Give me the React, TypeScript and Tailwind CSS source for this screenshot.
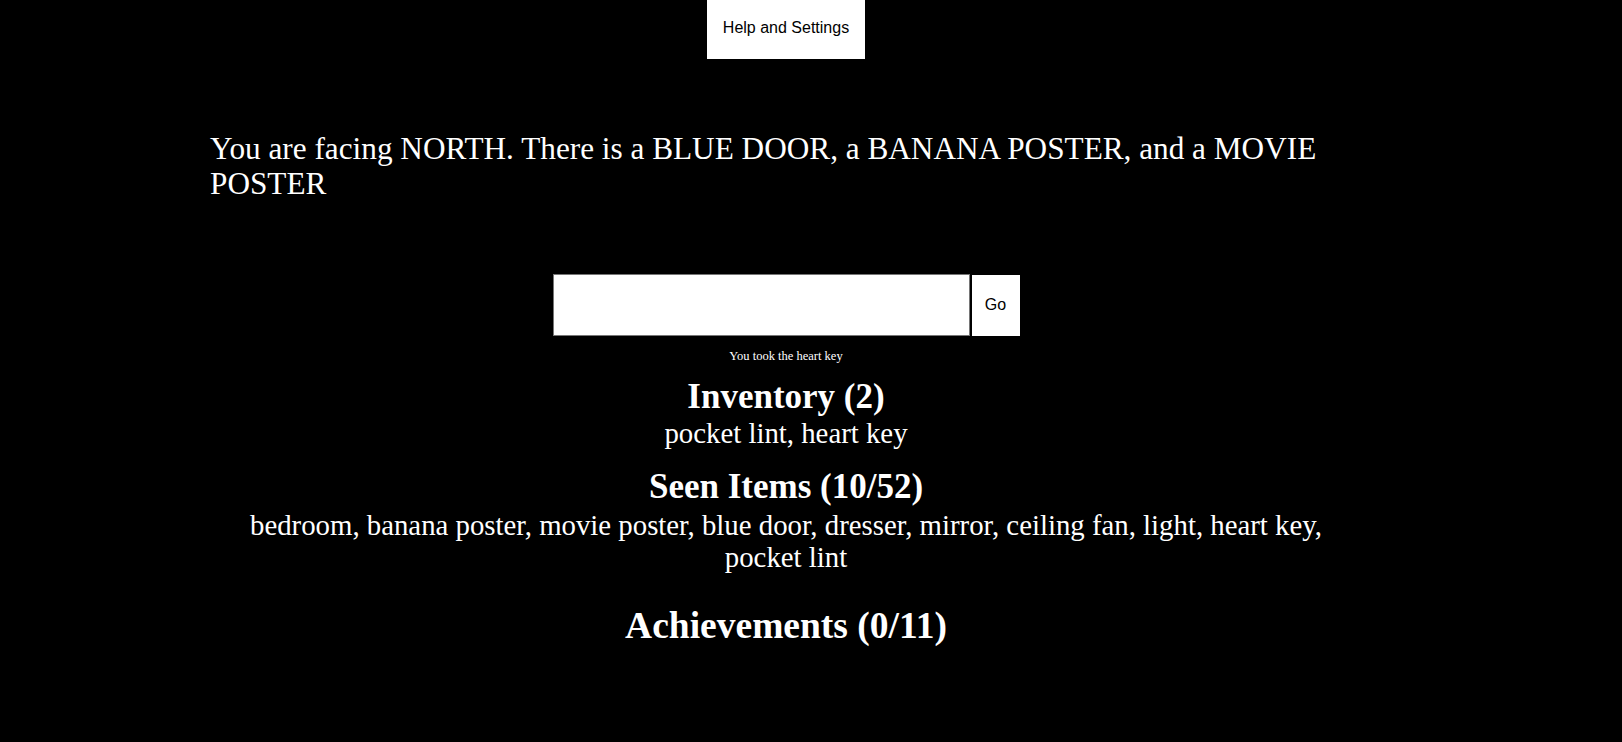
import React, { useState } from "react";

const seenItems = [
  "bedroom",
  "banana poster",
  "movie poster",
  "blue door",
  "dresser",
  "mirror",
  "ceiling fan",
  "light",
  "heart key",
  "pocket lint",
];

const inventory = ["pocket lint", "heart key"];

const App = () => {
  const [command, setCommand] = useState("");

  return (
    <div className="min-h-[742px] w-full bg-black text-white font-['Liberation_Serif',serif]">
      <div className="w-[1572px] flex flex-col items-center">
        <button
          type="button"
          className="h-[59px] px-[16px] pb-[4px] bg-white text-black text-[16px] font-['Liberation_Sans',Arial,sans-serif]"
        >
          Help and Settings
        </button>

        <div className="w-full px-[210px] mt-[72px]">
          <p className="text-[31.25px] leading-[35px]">
            You are facing NORTH. There is a BLUE DOOR, a BANANA POSTER, and a
            MOVIE POSTER
          </p>
        </div>

        <form
          className="flex items-center gap-[2px] mt-[73px]"
          onSubmit={(e) => e.preventDefault()}
        >
          <input
            value={command}
            onChange={(e) => setCommand(e.target.value)}
            className="w-[417px] h-[62px] bg-white text-black border border-[#767676] outline-none px-2 text-[16px]"
          />
          <button
            type="submit"
            className="w-[48px] h-[61px] bg-white text-black text-[16px] font-['Liberation_Sans',Arial,sans-serif]"
          >
            Go
          </button>
        </form>

        <p className="mt-[13px] text-[12.5px] leading-[14px]">
          You took the heart key
        </p>

        <h2 className="mt-[14px] text-[35px] leading-[40px] font-bold">
          Inventory ({inventory.length})
        </h2>
        <p className="text-[28.8px] leading-[32px] text-center">
          {inventory.join(", ")}
        </p>

        <h2 className="mt-[18px] text-[35px] leading-[40px] font-bold">
          Seen Items ({seenItems.length}/52)
        </h2>
        <p className="mt-[2px] w-full px-[210px] text-[28.8px] leading-[32px] text-center">
          {seenItems.join(", ")}
        </p>

        <h1 className="mt-[32px] text-[37.5px] leading-[42px] font-bold">
          Achievements (0/11)
        </h1>
      </div>
    </div>
  );
};

export default App;
